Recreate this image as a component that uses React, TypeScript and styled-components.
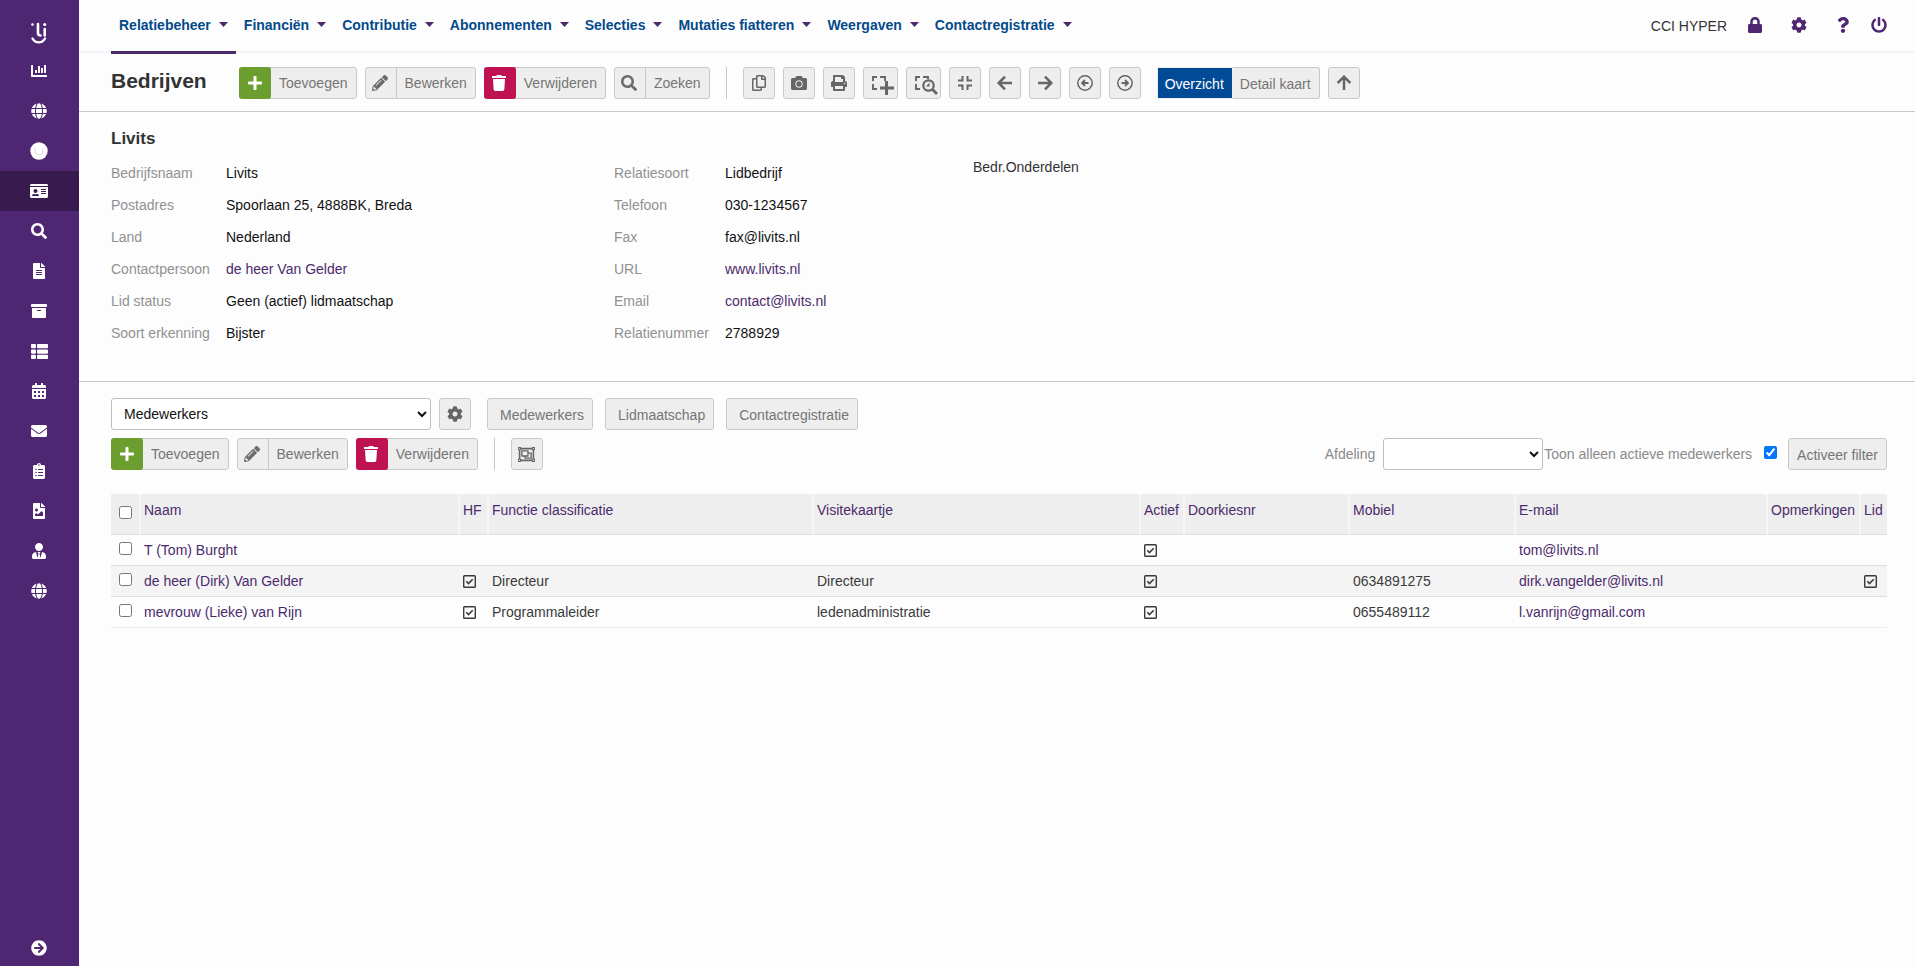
import React from 'react';
import styled, { createGlobalStyle, css } from 'styled-components';
import {
  FaArchive,
  FaArrowCircleRight,
  FaCalendarAlt,
  FaCamera,
  FaChartBar,
  FaClipboardList,
  FaCog,
  FaEnvelope,
  FaFileAlt,
  FaFileImage,
  FaGlobe,
  FaIdCard,
  FaLock,
  FaPencilAlt,
  FaPlus,
  FaPowerOff,
  FaPrint,
  FaQuestion,
  FaRegCopy,
  FaRegObjectGroup,
  FaSearch,
  FaThList,
  FaTrash,
  FaUserTie,
} from 'react-icons/fa';

const purple = '#4f2672';
const linkPurple = '#4b2a6b';
const line = '#c8c8cb';

const GlobalStyle = createGlobalStyle`
  * { box-sizing: border-box; }
  body {
    margin: 0;
    background: #fdfdfe;
    color: #333;
    font: 14px/20px "Liberation Sans", Arial, sans-serif;
  }
  button, select, input { font: inherit; }
  svg { display: block; flex: none; overflow: visible; }
`;

const Page = styled.div`
  display: flex;
  min-height: 100vh;
`;

/* ---------- sidebar ---------- */

const Sidebar = styled.nav`
  display: flex;
  flex-direction: column;
  flex: 0 0 79px;
  background: ${purple};
  color: #fff;
`;

const LogoLink = styled.a`
  display: flex;
  justify-content: center;
  height: 51px;
  padding: 21px 1px 0 0;
  color: #fff;
`;

const SideLink = styled.a<{ $active?: boolean; $last?: boolean }>`
  display: flex;
  align-items: center;
  justify-content: center;
  height: ${(p) => (p.$last ? '36px' : '40px')};
  padding-right: 1px;
  color: #fff;
  background: ${(p) => (p.$active ? '#391a4f' : 'transparent')};
  ${(p) => p.$last && css`margin-top: auto;`}
`;

const Main = styled.main`
  flex: 1;
  min-width: 0;
`;

/* ---------- top bar ---------- */

const TopBar = styled.header`
  display: flex;
  justify-content: space-between;
  height: 53px;
  padding: 0 28px 0 32px;
  border-bottom: 2px solid #f4f4f8;
`;

const Menu = styled.nav`
  display: flex;
  height: 54px;
`;

const MenuLink = styled.a<{ $active?: boolean }>`
  display: flex;
  align-items: center;
  gap: 8px;
  height: 54px;
  padding: 0 8px 2px;
  border-bottom: 3px solid ${(p) => (p.$active ? linkPurple : 'transparent')};
  color: #044a8a;
  font-weight: bold;
  text-decoration: none;
  white-space: nowrap;
`;

const Account = styled.div`
  display: flex;
  align-items: center;
  height: 51px;
  gap: 20px;
  white-space: nowrap;
`;

const AccountLink = styled.a<{ $wide?: boolean }>`
  display: flex;
  width: 16px;
  justify-content: center;
  padding-bottom: 2px;
  margin-right: ${(p) => (p.$wide ? '8px' : '0')};
  color: ${purple};
`;

/* ---------- toolbars ---------- */

const Toolbar = styled.div`
  display: flex;
  align-items: center;
  gap: 8px;
  height: 59px;
  padding: 2px 28px 0 32px;
  border-bottom: 1px solid ${line};
`;

const Title = styled.h1`
  margin: 0 0 5px;
  width: 120px;
  font-size: 21px;
  line-height: 24px;
`;

const buttonBase = css`
  height: 32px;
  border: 1px solid ${line};
  border-radius: 3px;
  background: #eee;
  color: #757575;
  white-space: nowrap;
`;

const ActionButton = styled.button`
  ${buttonBase}
  display: flex;
  align-items: center;
  padding: 0 8px 0 0;
  gap: 8px;
`;

const ActionIcon = styled.span<{ $tone?: string }>`
  display: flex;
  align-items: center;
  justify-content: center;
  width: 32px;
  height: ${(p) => (p.$tone ? '32px' : '30px')};
  margin-left: -1px;
  border-right: 1px solid ${(p) => p.$tone ?? line};
  border-radius: ${(p) => (p.$tone ? '3px' : '0')};
  background: ${(p) => p.$tone ?? 'transparent'};
  color: ${(p) => (p.$tone ? '#fff' : '#6b6b6b')};
`;

const IconButton = styled.button<{ $wide?: boolean }>`
  ${buttonBase}
  display: flex;
  align-items: center;
  justify-content: center;
  width: ${(p) => (p.$wide ? '35px' : '32px')};
  padding: 0;
  color: #666;
`;

const TextButton = styled.button<{ $roomy?: boolean }>`
  ${buttonBase}
  padding: ${(p) => (p.$roomy ? '2px 8px 0 12px' : '2px 8px 0')};
`;

const Separator = styled.span`
  width: 1px;
  height: 32px;
  margin: 0 8px;
  background: ${line};
`;

const Segmented = styled.div`
  display: flex;
  margin-left: 8px;
`;

const Segment = styled.button<{ $active?: boolean }>`
  ${buttonBase}
  padding: 1px 8px 0 7px;
  ${(p) =>
    p.$active
      ? css`
          border-color: #eee;
          border-right: 0;
          border-radius: 0;
          background: #004a96;
          color: #fff;
        `
      : css`
          border-left-color: #eee;
          border-radius: 0 3px 3px 0;
        `}
`;

/* ---------- company details ---------- */

const Details = styled.section`
  height: 270px;
  padding: 15px 28px 0 32px;
  border-bottom: 1px solid ${line};
`;

const DetailsTitle = styled.h2`
  margin: 0;
  font-size: 17px;
  line-height: 24px;
`;

const DetailsColumns = styled.div`
  display: grid;
  grid-template-columns: 503px 359px 1fr;
  padding-top: 6px;
`;

const FieldList = styled.dl<{ $label: number }>`
  display: grid;
  grid-template-columns: ${(p) => p.$label}px 1fr;
  grid-auto-rows: 32px;
  align-items: center;
  margin: 0;
  white-space: nowrap;
`;

const FieldName = styled.dt`
  color: #919191;
`;

const FieldValue = styled.dd`
  margin: 0;
  color: #111;
`;

const Link = styled.a`
  color: ${linkPurple};
  text-decoration: none;
`;

/* ---------- related records ---------- */

const Related = styled.section`
  padding: 16px 28px 0 32px;
`;

const ToolRow = styled.div<{ $gap: number }>`
  display: flex;
  align-items: center;
  gap: ${(p) => p.$gap}px;
  height: 32px;
  margin-bottom: 8px;
`;

const Select = styled.select<{ $width: number }>`
  width: ${(p) => p.$width}px;
  height: 32px;
  padding: 0 0 0 8px;
  border: 1px solid #bfbfc2;
  border-radius: 3px;
  background: #fff;
  color: #111;
`;

const PickerGroup = styled.div`
  display: flex;
  gap: 8px;
  margin-right: 4px;
`;

const Filter = styled.div`
  display: flex;
  align-items: center;
  margin-left: auto;
  color: #8a8a8a;
  white-space: nowrap;
`;

const AfdelingLabel = styled.label`
  margin-right: 8px;
`;

const ActiveLabel = styled.label`
  display: flex;
  gap: 12px;
  margin: 0 11px 0 1px;
`;

const Check = styled.input`
  display: block;
  width: 13px;
  height: 13px;
  margin: 2px 0 0;
`;

const Table = styled.table`
  width: 100%;
  margin-top: 24px;
  table-layout: fixed;
  border-collapse: separate;
  border-spacing: 0;
  white-space: nowrap;
`;

const Head = styled.th`
  height: 41px;
  padding: 6px 0 0 3px;
  border-right: 2px solid #f6f6f8;
  border-bottom: 1px solid #e0e0e2;
  background: #eee;
  color: ${linkPurple};
  font-weight: normal;
  text-align: left;
  vertical-align: top;
  &:first-child { padding: 10px 0 0 8px; }
  &:last-child { border-right: 0; }
`;

const Row = styled.tr`
  &:nth-child(even) { background: #f4f4f4; }
`;

const Cell = styled.td`
  height: 31px;
  padding: 0 0 0 3px;
  border-bottom: 1px solid #dedee0;
  color: #3a3a3a;
  ${Row}:last-child & { border-bottom-color: #ececef; }
  &:first-child { padding: 5px 0 0 8px; vertical-align: top; }
`;

/* ---------- drawn icons ---------- */

const Logo = () => (
  <svg width="18" height="24" viewBox="0 0 18 24" fill="none" stroke="#fff" strokeLinecap="round">
    <circle cx="2.5" cy="3.5" r="1.3" fill="#fff" stroke="none" />
    <path d="M8 3v9q0 2.500 2.500 2.500" strokeWidth="2.600" />
    <path d="M14.700 8v6.500" strokeWidth="2.600" />
    <circle cx="14.700" cy="3.500" r="1.600" fill="#fff" stroke="none" />
    <path d="M2.500 17.500c3 5.200 9.500 5.200 12.500 0" strokeWidth="2.400" />
  </svg>
);

const Coin = () => (
  <svg width="18" height="18" viewBox="0 0 18 18" fill="none">
    <circle cx="9" cy="9" r="8.700" fill="#fff" />
    <path d="M5 6v3.500q0 3 4 3t4-3V6" stroke="#e2dde6" strokeWidth="1.200" />
  </svg>
);

const stroke = { fill: 'none', stroke: 'currentColor' } as const;

const Caret = () => (
  <svg width="9" height="5" viewBox="0 0 9 5" fill={linkPurple}>
    <path d="M0 0h9L4.500 5z" />
  </svg>
);

const SelectAdd = () => (
  <svg width="25" height="20" viewBox="0 0 25 20" {...stroke} strokeWidth="1.900">
    <path d="M5 8V4h4M12 4h5v4M5 11v5h4" />
    <path d="M18.500 8v14M12 15h14" strokeWidth="3" />
  </svg>
);

const SelectZoom = () => (
  <svg width="25" height="20" viewBox="0 0 25 20" {...stroke} strokeWidth="1.900">
    <path d="M5 8V4h4M12 4h5v2M5 11v5h4" />
    <circle cx="17.500" cy="12.500" r="5.200" strokeWidth="2.200" />
    <path d="M21.500 16.500l4.500 4.500" strokeWidth="2.800" />
    <path d="M18.500 9.500v4h-3.500z" fill="currentColor" stroke="none" />
  </svg>
);

const Compress = () => (
  <svg width="16" height="16" viewBox="0 0 16 16" {...stroke} strokeWidth="2">
    <path d="M5.500 1v4.500H1M10.500 1v4.500H15M5.500 15v-4.500H1M10.500 15v-4.500H15" />
  </svg>
);

const Arrow = ({ turn }: { turn: number }) => (
  <svg width="16" height="16" viewBox="0 0 16 16" {...stroke} strokeWidth="2.500">
    <path d="M1 8h13M8 1.700L14.300 8 8 14.300" transform={`rotate(${turn} 8 8)`} />
  </svg>
);

const CircleArrow = ({ turn }: { turn: number }) => (
  <svg width="16" height="16" viewBox="0 0 16 16" {...stroke} strokeWidth="1.500">
    <circle cx="8" cy="8" r="7.200" />
    <path d="M4.500 8h6M8 5l3 3-3 3" strokeWidth="1.800" transform={`rotate(${turn} 8 8)`} />
  </svg>
);

const Ticked = () => (
  <svg width="13" height="13" viewBox="0 0 13 13" {...stroke} role="img" aria-label="Ja">
    <rect x=".7" y=".7" width="11.600" height="11.600" rx=".8" strokeWidth="1.400" />
    <path d="M3.300 6.300l2.200 2.300 4.200-4.300" strokeWidth="1.600" />
  </svg>
);

/* ---------- data ---------- */

const sideItems = [
  { label: 'Dashboard', icon: <FaChartBar size={16} /> },
  { label: 'Website', icon: <FaGlobe size={16} /> },
  { label: 'Community', icon: <Coin /> },
  { label: 'Relaties', icon: <FaIdCard size={18} />, active: true },
  { label: 'Zoeken', icon: <FaSearch size={16} /> },
  { label: 'Documenten', icon: <FaFileAlt size={16} /> },
  { label: 'Archief', icon: <FaArchive size={16} /> },
  { label: 'Lijsten', icon: <FaThList size={17} /> },
  { label: 'Agenda', icon: <FaCalendarAlt size={16} /> },
  { label: 'E-mail', icon: <FaEnvelope size={16} /> },
  { label: 'Taken', icon: <FaClipboardList size={16} /> },
  { label: 'Afbeeldingen', icon: <FaFileImage size={16} /> },
  { label: 'Gebruikers', icon: <FaUserTie size={16} /> },
  { label: 'Portaal', icon: <FaGlobe size={16} /> },
];

const menuItems = [
  'Relatiebeheer',
  'Financiën',
  'Contributie',
  'Abonnementen',
  'Selecties',
  'Mutaties fiatteren',
  'Weergaven',
  'Contactregistratie',
];

type Field = [name: string, value: string, link?: boolean];

const addressFields: Field[] = [
  ['Bedrijfsnaam', 'Livits'],
  ['Postadres', 'Spoorlaan 25, 4888BK, Breda'],
  ['Land', 'Nederland'],
  ['Contactpersoon', 'de heer Van Gelder', true],
  ['Lid status', 'Geen (actief) lidmaatschap'],
  ['Soort erkenning', 'Bijster'],
];

const contactFields: Field[] = [
  ['Relatiesoort', 'Lidbedrijf'],
  ['Telefoon', '030-1234567'],
  ['Fax', 'fax@livits.nl'],
  ['URL', 'www.livits.nl', true],
  ['Email', 'contact@livits.nl', true],
  ['Relatienummer', '2788929'],
];

const columns: [title: string, width: number][] = [
  ['Naam', 319],
  ['HF', 29],
  ['Functie classificatie', 325],
  ['Visitekaartje', 327],
  ['Actief', 44],
  ['Doorkiesnr', 165],
  ['Mobiel', 166],
  ['E-mail', 252],
  ['Opmerkingen', 93],
  ['Lid', 26],
];

const employees = [
  { name: 'T (Tom) Burght', hf: false, role: '', card: '', mobile: '', email: 'tom@livits.nl', member: false },
  {
    name: 'de heer (Dirk) Van Gelder',
    hf: true,
    role: 'Directeur',
    card: 'Directeur',
    mobile: '0634891275',
    email: 'dirk.vangelder@livits.nl',
    member: true,
  },
  {
    name: 'mevrouw (Lieke) van Rijn',
    hf: true,
    role: 'Programmaleider',
    card: 'ledenadministratie',
    mobile: '0655489112',
    email: 'l.vanrijn@gmail.com',
    member: false,
  },
];

/* ---------- composed parts ---------- */

const Action = ({ icon, tone, children }: { icon: React.ReactNode; tone?: string; children: React.ReactNode }) => (
  <ActionButton type="button">
    <ActionIcon $tone={tone}>{icon}</ActionIcon>
    {children}
  </ActionButton>
);

const EditActions = () => (
  <>
    <Action icon={<FaPlus size={16} />} tone="#6b9e2e">Toevoegen</Action>
    <Action icon={<FaPencilAlt size={16} />}>Bewerken</Action>
    <Action icon={<FaTrash size={16} />} tone="#be1253">Verwijderen</Action>
  </>
);

const Fields = ({ fields, label }: { fields: Field[]; label: number }) => (
  <FieldList $label={label}>
    {fields.map(([name, value, link]) => (
      <React.Fragment key={name}>
        <FieldName>{name}</FieldName>
        <FieldValue>{link ? <Link href="#">{value}</Link> : value}</FieldValue>
      </React.Fragment>
    ))}
  </FieldList>
);

export default function App() {
  return (
    <Page>
      <GlobalStyle />
      <Sidebar>
        <LogoLink href="#" aria-label="Start"><Logo /></LogoLink>
        {sideItems.map(({ label, icon, active }) => (
          <SideLink key={label} href="#" aria-label={label} $active={active}>{icon}</SideLink>
        ))}
        <SideLink href="#" aria-label="Uitklappen" $last><FaArrowCircleRight size={16} /></SideLink>
      </Sidebar>

      <Main>
        <TopBar>
          <Menu>
            {menuItems.map((item, i) => (
              <MenuLink key={item} href="#" $active={i === 0}>{item}<Caret /></MenuLink>
            ))}
          </Menu>
          <Account>
            <span>CCI HYPER</span>
            <AccountLink href="#" aria-label="Vergrendelen" $wide><FaLock size={16} /></AccountLink>
            <AccountLink href="#" aria-label="Instellingen" $wide><FaCog size={16} /></AccountLink>
            <AccountLink href="#" aria-label="Help"><FaQuestion size={16} /></AccountLink>
            <AccountLink href="#" aria-label="Uitloggen"><FaPowerOff size={16} /></AccountLink>
          </Account>
        </TopBar>

        <Toolbar>
          <Title>Bedrijven</Title>
          <EditActions />
          <Action icon={<FaSearch size={16} />}>Zoeken</Action>
          <Separator />
          <IconButton type="button" aria-label="Kopiëren"><FaRegCopy size={16} /></IconButton>
          <IconButton type="button" aria-label="Momentopname"><FaCamera size={16} /></IconButton>
          <IconButton type="button" aria-label="Afdrukken"><FaPrint size={16} /></IconButton>
          <IconButton type="button" aria-label="Selectie toevoegen" $wide><SelectAdd /></IconButton>
          <IconButton type="button" aria-label="Selectie zoeken" $wide><SelectZoom /></IconButton>
          <IconButton type="button" aria-label="Inklappen"><Compress /></IconButton>
          <IconButton type="button" aria-label="Vorige"><Arrow turn={180} /></IconButton>
          <IconButton type="button" aria-label="Volgende"><Arrow turn={0} /></IconButton>
          <IconButton type="button" aria-label="Terug"><CircleArrow turn={180} /></IconButton>
          <IconButton type="button" aria-label="Vooruit"><CircleArrow turn={0} /></IconButton>
          <Segmented>
            <Segment type="button" $active>Overzicht</Segment>
            <Segment type="button">Detail kaart</Segment>
          </Segmented>
          <IconButton type="button" aria-label="Omhoog"><Arrow turn={-90} /></IconButton>
        </Toolbar>

        <Details>
          <DetailsTitle>Livits</DetailsTitle>
          <DetailsColumns>
            <Fields fields={addressFields} label={115} />
            <Fields fields={contactFields} label={111} />
            <span>Bedr.Onderdelen</span>
          </DetailsColumns>
        </Details>

        <Related>
          <ToolRow $gap={12}>
            <PickerGroup>
              <Select $width={320} aria-label="Onderdeel"><option>Medewerkers</option></Select>
              <IconButton type="button" aria-label="Instellingen"><FaCog size={16} /></IconButton>
            </PickerGroup>
            <TextButton type="button" $roomy>Medewerkers</TextButton>
            <TextButton type="button" $roomy>Lidmaatschap</TextButton>
            <TextButton type="button" $roomy>Contactregistratie</TextButton>
          </ToolRow>
          <ToolRow $gap={8}>
            <EditActions />
            <Separator />
            <IconButton type="button" aria-label="Groeperen"><FaRegObjectGroup size={17} /></IconButton>
            <Filter>
              <AfdelingLabel htmlFor="afdeling">Afdeling</AfdelingLabel>
              <Select id="afdeling" $width={160}><option></option></Select>
              <ActiveLabel>
                Toon alleen actieve medewerkers
                <Check type="checkbox" defaultChecked />
              </ActiveLabel>
              <TextButton type="button">Activeer filter</TextButton>
            </Filter>
          </ToolRow>

          <Table>
            <colgroup>
              <col width={30} />
              {columns.map(([title, width]) => <col key={title} width={width} />)}
            </colgroup>
            <thead>
              <tr>
                <Head><Check type="checkbox" aria-label="Alles selecteren" /></Head>
                {columns.map(([title]) => <Head key={title}>{title}</Head>)}
              </tr>
            </thead>
            <tbody>
              {employees.map((e) => (
                <Row key={e.name}>
                  <Cell><Check type="checkbox" aria-label={`Selecteer ${e.name}`} /></Cell>
                  <Cell><Link href="#">{e.name}</Link></Cell>
                  <Cell>{e.hf && <Ticked />}</Cell>
                  <Cell>{e.role}</Cell>
                  <Cell>{e.card}</Cell>
                  <Cell><Ticked /></Cell>
                  <Cell />
                  <Cell>{e.mobile}</Cell>
                  <Cell><Link href="#">{e.email}</Link></Cell>
                  <Cell />
                  <Cell>{e.member && <Ticked />}</Cell>
                </Row>
              ))}
            </tbody>
          </Table>
        </Related>
      </Main>
    </Page>
  );
}
